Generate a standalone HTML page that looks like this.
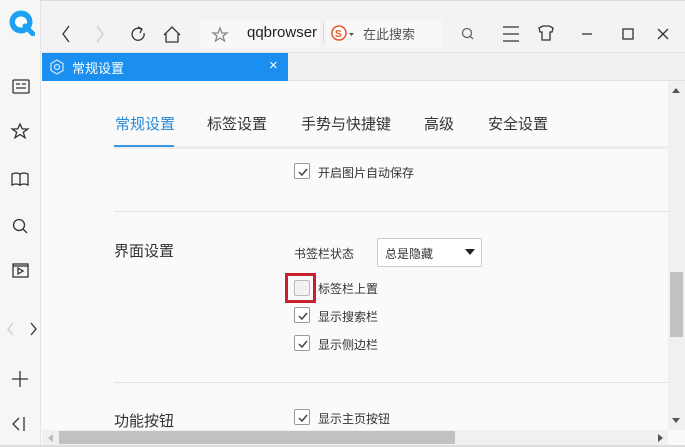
<!DOCTYPE html>
<html><head><meta charset="utf-8"><style>
*{margin:0;padding:0;box-sizing:border-box}
body{width:685px;height:447px;overflow:hidden;background:#fafafa;font-family:"Liberation Sans","Noto Sans CJK SC",sans-serif;position:relative;color:#333}
.a{position:absolute}
.cb{position:absolute;width:16px;height:16px;border:1px solid #9a9a9a;border-radius:2px;background:#fff}
.cb svg{position:absolute;left:1px;top:1px}
.t12{font-size:12px;color:#333}
</style></head><body>
<div class="a" style="left:0;top:0;width:685px;height:53px;background:#f3f3f5;border-top:1px solid #ddd;border-bottom:1px solid #e2e2e4"></div>
<div class="a" style="left:200px;top:20px;width:120px;height:28px;background:#f8f8f9"></div>
<div class="a" style="left:323px;top:22px;width:1px;height:22px;background:#ddd"></div>
<div class="a" style="left:326px;top:20px;width:116px;height:28px;background:#f8f8f9"></div>
<div class="a" style="left:0;top:0;width:41px;height:447px;background:#f6f6f7;border-right:1px solid #e4e4e4"></div>
<svg class="a" style="left:9px;top:10px" width="26" height="26" viewBox="0 0 26 26"><circle cx="12" cy="12" r="11.5" fill="#1da1f2"/><ellipse cx="12" cy="12" rx="6" ry="5.5" fill="#fff"/><path d="M16 16l8 8" stroke="#1da1f2" stroke-width="5" stroke-linecap="round"/></svg>
<svg class="a" style="left:0;top:0" width="685" height="447" fill="none" stroke="#333" stroke-width="1.3">
<path d="M69 26l-6 8 6 8"/><path d="M97 26l6 8-6 8" stroke="#ccc"/>
<path d="M141 29a6 6 0 1 0 3 4"/><path d="M138 27l4 2-2 4"/>
<path d="M164 35l8-8 8 8M166 34v8h12v-8"/>
<path d="M220 28l2 5h5l-4 3 1.5 5-4.5-3-4.5 3 1.5-5-4-3h5z" stroke="#888"/>
<circle cx="467" cy="33" r="4.5" stroke="#666"/><path d="M470 36l3 3" stroke="#666"/>
<path d="M503 27h16M503 34h16M503 41h16"/>
<path d="M539 28l4-2h6l4 2-1 4h-2v8h-8v-8h-2z"/>
<path d="M582 34h10"/><rect x="623" y="29" width="10" height="10"/><path d="M658 29l10 10M668 29l-10 10"/>
<rect x="13" y="80" width="16" height="13" rx="1"/><path d="M16 84h4M16 88h10M22 84h4"/>
<path d="M20 124l2.3 5h5.5l-4.5 3.3 1.7 5.4-5-3.2-5 3.2 1.7-5.4-4.5-3.3h5.5z"/>
<path d="M12 174q4-2 8 0v11q-4-2-8 0zM20 174q4-2 8 0v11q-4-2-8 0z"/>
<circle cx="19" cy="225" r="5.5"/><path d="M23 229l4 4"/>
<rect x="13" y="264" width="15" height="13"/><path d="M18 268v6l5-3z"/><path d="M13 266h15"/>
<path d="M13 323l-5 6 5 6" stroke="#ccc"/><path d="M31 323l5 6-5 6"/>
<path d="M12 379h16M20 371v16"/>
<path d="M19 418l-6 6 6 6M24 417v14"/>
<path d="M300 67h12M306 61v12" stroke="#222"/>
</svg>
<div class="a" style="left:247px;top:24px;font-size:15px;color:#222">qqbrowser</div>
<svg class="a" style="left:330px;top:25px" width="24" height="18"><circle cx="9" cy="8" r="7" fill="#fff" stroke="#e8562a" stroke-width="1.5"/><text x="5" y="12" font-size="10" fill="#e8562a" font-weight="bold" font-family="Liberation Sans">S</text><path d="M19 8h5l-2.5 3z" fill="#555"/></svg>
<div class="a" style="left:363px;top:24px;font-size:13px;color:#555">在此搜索</div>
<div class="a" style="left:42px;top:53px;width:643px;height:28px;background:#f1f1f3;border-bottom:1px solid #e0e0e0"></div>
<div class="a" style="left:42px;top:53px;width:246px;height:28px;background:#1a8ff0"></div>
<svg class="a" style="left:48px;top:58px" width="18" height="18" fill="none" stroke="#cfe6fb" stroke-width="1.2"><path d="M9 2l6 3.5v7L9 16l-6-3.5v-7z"/><circle cx="9" cy="9" r="2.5"/></svg>
<div class="a" style="left:72px;top:58px;font-size:13px;color:#fff">常规设置</div>
<div class="a" style="left:269px;top:57px;font-size:15px;color:#fff">×</div>
<div class="a" style="left:115px;top:113px;font-size:15px;color:#2a8ad6">常规设置</div>
<div class="a" style="left:207px;top:113px;font-size:15px;color:#333">标签设置</div>
<div class="a" style="left:301px;top:113px;font-size:15px;color:#333">手势与快捷键</div>
<div class="a" style="left:424px;top:113px;font-size:15px;color:#333">高级</div>
<div class="a" style="left:488px;top:113px;font-size:15px;color:#333">安全设置</div>
<div class="a" style="left:114px;top:146px;width:554px;height:3px;background:#ececee"></div>
<div class="a" style="left:114px;top:145px;width:60px;height:2px;background:#3a95dc"></div>
<div class="cb" style="left:294px;top:163px"><svg width="14" height="14"><path d="M3 7l3 3 5-6" stroke="#444" stroke-width="1.5" fill="none"/></svg></div>
<div class="a t12" style="left:318px;top:164px">开启图片自动保存</div>
<div class="a" style="left:114px;top:211px;width:554px;height:1px;background:#e4e4e4"></div>
<div class="a" style="left:114px;top:240px;font-size:15px;color:#333">界面设置</div>
<div class="a t12" style="left:294px;top:245px">书签栏状态</div>
<div class="a" style="left:377px;top:238px;width:105px;height:29px;border:1px solid #ccc;background:#fff;border-radius:2px"></div>
<div class="a t12" style="left:385px;top:245px">总是隐藏</div>
<svg class="a" style="left:465px;top:249px" width="10" height="6"><path d="M0 0h10L5 6z" fill="#222"/></svg>
<div class="a" style="left:285px;top:273px;width:31px;height:30px;border:3px solid #c8202c"></div>
<div class="a" style="left:294px;top:280px;width:16px;height:16px;border:1px solid #bbb;border-radius:2px;background:#f2f2f2"></div>
<div class="a t12" style="left:318px;top:280px">标签栏上置</div>
<div class="cb" style="left:294px;top:307px"><svg width="14" height="14"><path d="M3 7l3 3 5-6" stroke="#444" stroke-width="1.5" fill="none"/></svg></div>
<div class="a t12" style="left:318px;top:308px">显示搜索栏</div>
<div class="cb" style="left:294px;top:335px"><svg width="14" height="14"><path d="M3 7l3 3 5-6" stroke="#444" stroke-width="1.5" fill="none"/></svg></div>
<div class="a t12" style="left:318px;top:336px">显示侧边栏</div>
<div class="a" style="left:114px;top:382px;width:554px;height:1px;background:#e4e4e4"></div>
<div class="a" style="left:114px;top:410px;font-size:15px;color:#333">功能按钮</div>
<div class="cb" style="left:294px;top:409px"><svg width="14" height="14"><path d="M3 7l3 3 5-6" stroke="#444" stroke-width="1.5" fill="none"/></svg></div>
<div class="a t12" style="left:318px;top:410px">显示主页按钮</div>
<div class="a" style="left:668px;top:81px;width:17px;height:349px;background:#f0f0f0"></div>
<svg class="a" style="left:672px;top:88px" width="8" height="5"><path d="M0 5h8L4 0z" fill="#555"/></svg>
<div class="a" style="left:670px;top:272px;width:13px;height:65px;background:#c1c1c1"></div>
<svg class="a" style="left:672px;top:418px" width="8" height="5"><path d="M0 0h8L4 5z" fill="#555"/></svg>
<div class="a" style="left:42px;top:430px;width:626px;height:15px;background:#f0f0f0"></div>
<svg class="a" style="left:48px;top:434px" width="5" height="8"><path d="M5 0v8L0 4z" fill="#bbb"/></svg>
<div class="a" style="left:59px;top:431px;width:396px;height:13px;background:#c1c1c1"></div>
<svg class="a" style="left:658px;top:434px" width="5" height="8"><path d="M0 0v8L5 4z" fill="#555"/></svg>
<div class="a" style="left:0;top:445px;width:685px;height:2px;background:#ddd"></div>
</body></html>
